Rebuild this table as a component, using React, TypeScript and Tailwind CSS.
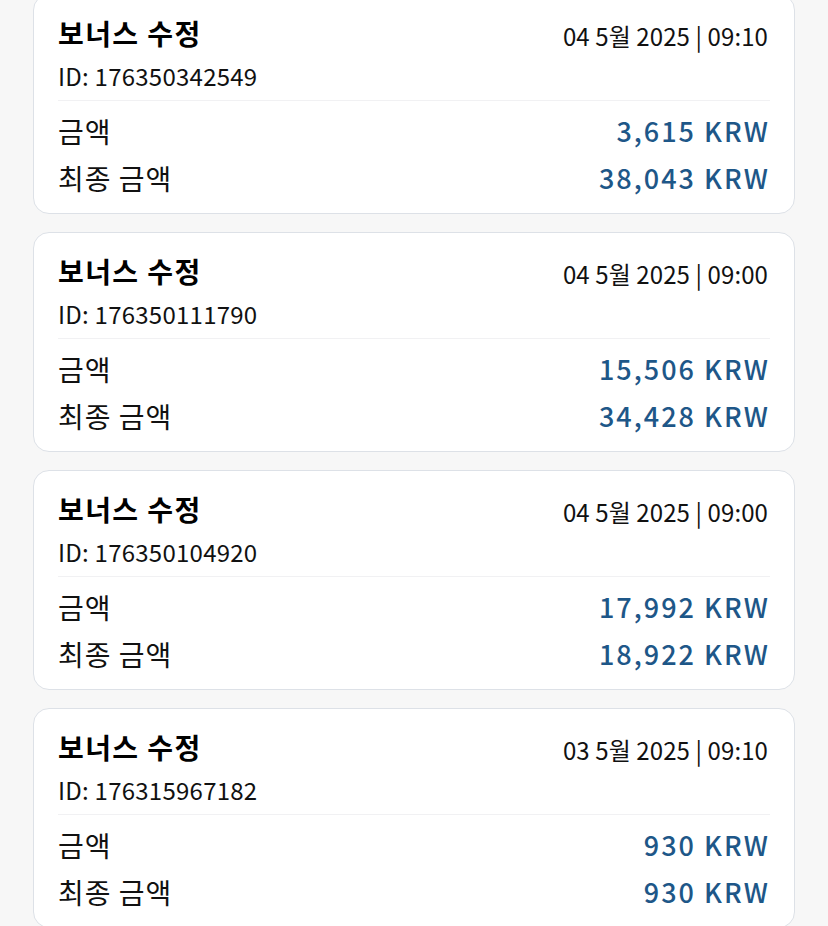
const font = { fontFamily: '"Noto Sans CJK KR", "Noto Sans", sans-serif' };

type Tx = {
  id: string;
  date: string;
  amount: string;
  total: string;
};

const items: Tx[] = [
  { id: '176350342549', date: '04 5월 2025 | 09:10', amount: '3,615 KRW', total: '38,043 KRW' },
  { id: '176350111790', date: '04 5월 2025 | 09:00', amount: '15,506 KRW', total: '34,428 KRW' },
  { id: '176350104920', date: '04 5월 2025 | 09:00', amount: '17,992 KRW', total: '18,922 KRW' },
  { id: '176315967182', date: '03 5월 2025 | 09:10', amount: '930 KRW', total: '930 KRW' },
];

function TxCard({ tx }: { tx: Tx }) {
  return (
    <div className="rounded-[16px] border-[1.5px] border-[#dde1e7] bg-white px-6 pt-[19px] pb-[15px]">
      <div className="flex items-start justify-between">
        <div>
          <p className="text-[28px] font-bold leading-[38px] tracking-[1.4px] text-black">보너스 수정</p>
          <p className="mt-[8px] text-[24px] leading-[32px] tracking-[0.25px] text-[#111]">ID: {tx.id}</p>
        </div>
        <p className="mt-[6px] mr-[2px] text-[24px] leading-[32px] tracking-[0.1px] text-[#111]">{tx.date}</p>
      </div>
      <div className="mt-[8px] h-px bg-[#f1f1f3]" />
      <div className="mt-[10px] flex items-center justify-between leading-[40px]">
        <span className="text-[28px] tracking-[1px] text-[#111]">금액</span>
        <span className="text-[27px] font-medium tracking-[2px] text-[#1e5788]">{tx.amount}</span>
      </div>
      <div className="mt-[7px] flex items-center justify-between leading-[40px]">
        <span className="text-[28px] tracking-[1px] text-[#111]">최종 금액</span>
        <span className="text-[27px] font-medium tracking-[2px] text-[#1e5788]">{tx.total}</span>
      </div>
    </div>
  );
}

export default function App() {
  return (
    <div className="min-h-[926px] overflow-hidden bg-[#f7f7f7]" style={font}>
      <div className="-mt-[6px] flex flex-col gap-[18px] px-[33px]">
        {items.map((tx) => (
          <TxCard key={tx.id} tx={tx} />
        ))}
      </div>
    </div>
  );
}
